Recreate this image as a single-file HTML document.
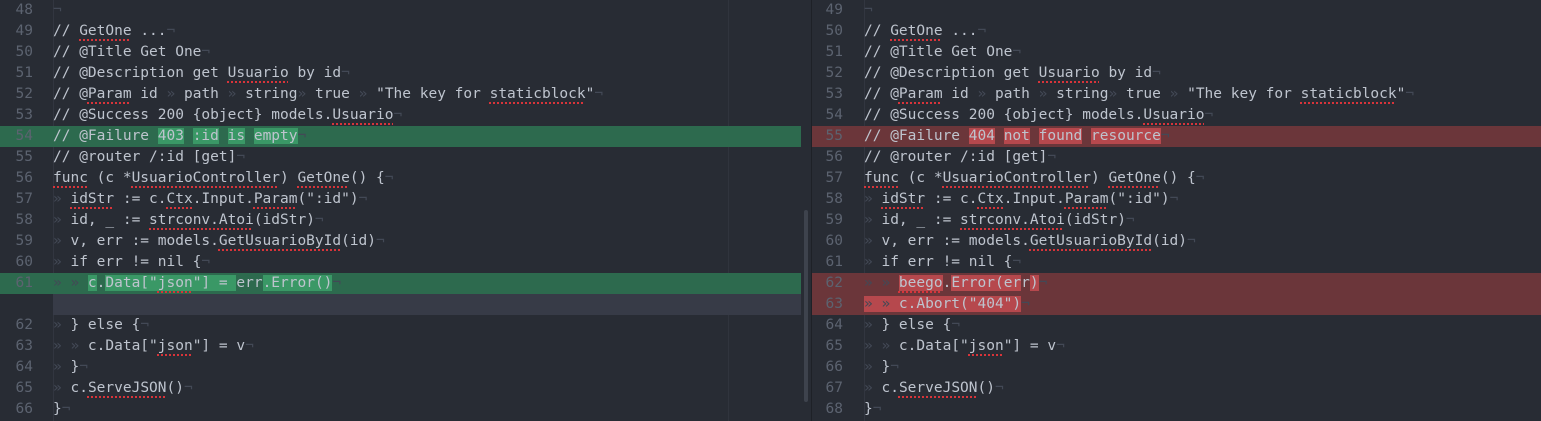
<!DOCTYPE html>
<html><head><meta charset="utf-8">
<style>
*{margin:0;padding:0;box-sizing:border-box}
body{width:1541px;height:421px;background:#282c34;overflow:hidden;position:relative;font-family:"DejaVu Sans Mono","Liberation Mono",monospace;font-size:14.5px;color:#bec4ce}
.pane{position:absolute;top:0;height:421px;overflow:hidden}
.row{position:absolute;left:0;right:0;height:21px;line-height:21px;white-space:pre}
.n{position:absolute;left:0;text-align:right;color:#5c6370}
.c{position:absolute}
.gl{background:#2d6a4e}
.gw{background:#3a9866}
.rl{background:#6b363a}
.rw{background:#b6484d}
.fill{background:#373b47}
.i{color:#434956}
.u{text-decoration:underline dotted #d8343a;text-decoration-thickness:2px;text-underline-offset:4px}
</style></head><body>

<div class="pane" style="left:0;width:801px">
<div style="position:absolute;left:53px;top:0;width:1px;height:421px;background:#323640"></div>
<div style="position:absolute;left:728px;top:0;width:1px;height:421px;background:#30343d"></div>
<div class="row" style="top:0"><span class="n" style="width:33px">48</span><span class="c" style="left:53px"><span class="i">¬</span></span></div>
<div class="row" style="top:21px"><span class="n" style="width:33px">49</span><span class="c" style="left:53px">// <span class="u">GetOne</span> ...<span class="i">¬</span></span></div>
<div class="row" style="top:42px"><span class="n" style="width:33px">50</span><span class="c" style="left:53px">// @Title Get One<span class="i">¬</span></span></div>
<div class="row" style="top:63px"><span class="n" style="width:33px">51</span><span class="c" style="left:53px">// @Description get <span class="u">Usuario</span> by id<span class="i">¬</span></span></div>
<div class="row" style="top:84px"><span class="n" style="width:33px">52</span><span class="c" style="left:53px">// @<span class="u">Param</span> id<span class="i"> » </span>path<span class="i"> » </span>string<span class="i">» </span>true<span class="i"> » </span>"The key for <span class="u">staticblock</span>"<span class="i">¬</span></span></div>
<div class="row" style="top:105px"><span class="n" style="width:33px">53</span><span class="c" style="left:53px">// @Success 200 {object} models.<span class="u">Usuario</span><span class="i">¬</span></span></div>
<div class="row gl" style="top:126px"><span class="n" style="width:33px">54</span><span class="c" style="left:53px">// @Failure <span class="gw">403</span> <span class="gw">:id</span> <span class="gw">is</span> <span class="gw">empty</span><span class="i">¬</span></span></div>
<div class="row" style="top:147px"><span class="n" style="width:33px">55</span><span class="c" style="left:53px">// @router /:id [get]<span class="i">¬</span></span></div>
<div class="row" style="top:168px"><span class="n" style="width:33px">56</span><span class="c" style="left:53px"><span class="u">func</span> (c *<span class="u">UsuarioController</span>) <span class="u">GetOne</span>() {<span class="i">¬</span></span></div>
<div class="row" style="top:189px"><span class="n" style="width:33px">57</span><span class="c" style="left:53px"><span class="i">» </span><span class="u">idStr</span> := c.<span class="u">Ctx</span>.Input.<span class="u">Param</span>(":id")<span class="i">¬</span></span></div>
<div class="row" style="top:210px"><span class="n" style="width:33px">58</span><span class="c" style="left:53px"><span class="i">» </span>id, _ := <span class="u">strconv.Atoi</span>(idStr)<span class="i">¬</span></span></div>
<div class="row" style="top:231px"><span class="n" style="width:33px">59</span><span class="c" style="left:53px"><span class="i">» </span>v, err := models.<span class="u">GetUsuarioById</span>(id)<span class="i">¬</span></span></div>
<div class="row" style="top:252px"><span class="n" style="width:33px">60</span><span class="c" style="left:53px"><span class="i">» </span>if err != nil {<span class="i">¬</span></span></div>
<div class="row gl" style="top:273px"><span class="n" style="width:33px">61</span><span class="c" style="left:53px"><span class="i">» » </span><span class="gw">c</span>.<span class="gw">Data["<span class="u">json</span>"] = </span>err<span class="gw">.Error()</span><span class="i">¬</span></span></div>
<div class="row fill" style="top:294px;left:53px"></div>
<div class="row" style="top:315px"><span class="n" style="width:33px">62</span><span class="c" style="left:53px"><span class="i">» </span>} else {<span class="i">¬</span></span></div>
<div class="row" style="top:336px"><span class="n" style="width:33px">63</span><span class="c" style="left:53px"><span class="i">» » </span>c.Data["<span class="u">json</span>"] = v<span class="i">¬</span></span></div>
<div class="row" style="top:357px"><span class="n" style="width:33px">64</span><span class="c" style="left:53px"><span class="i">» </span>}<span class="i">¬</span></span></div>
<div class="row" style="top:378px"><span class="n" style="width:33px">65</span><span class="c" style="left:53px"><span class="i">» </span>c.<span class="u">ServeJSON</span>()<span class="i">¬</span></span></div>
<div class="row" style="top:399px"><span class="n" style="width:33px">66</span><span class="c" style="left:53px">}<span class="i">¬</span></span></div>
</div>
<div style="position:absolute;left:804px;top:210px;width:4px;height:192px;background:#3e434d;border-radius:2px"></div>
<div style="position:absolute;left:811px;top:0;width:1px;height:421px;background:#1e2127"></div>

<div class="pane" style="left:812px;width:729px">
<div style="position:absolute;left:52px;top:0;width:1px;height:421px;background:#323640"></div>
<div class="row" style="top:0"><span class="n" style="width:31px">49</span><span class="c" style="left:52px"><span class="i">¬</span></span></div>
<div class="row" style="top:21px"><span class="n" style="width:31px">50</span><span class="c" style="left:52px">// <span class="u">GetOne</span> ...<span class="i">¬</span></span></div>
<div class="row" style="top:42px"><span class="n" style="width:31px">51</span><span class="c" style="left:52px">// @Title Get One<span class="i">¬</span></span></div>
<div class="row" style="top:63px"><span class="n" style="width:31px">52</span><span class="c" style="left:52px">// @Description get <span class="u">Usuario</span> by id<span class="i">¬</span></span></div>
<div class="row" style="top:84px"><span class="n" style="width:31px">53</span><span class="c" style="left:52px">// @<span class="u">Param</span> id<span class="i"> » </span>path<span class="i"> » </span>string<span class="i">» </span>true<span class="i"> » </span>"The key for <span class="u">staticblock</span>"<span class="i">¬</span></span></div>
<div class="row" style="top:105px"><span class="n" style="width:31px">54</span><span class="c" style="left:52px">// @Success 200 {object} models.<span class="u">Usuario</span><span class="i">¬</span></span></div>
<div class="row rl" style="top:126px"><span class="n" style="width:31px">55</span><span class="c" style="left:52px">// @Failure <span class="rw">404</span> <span class="rw">not</span> <span class="rw">found</span> <span class="rw">resource</span><span class="i">¬</span></span></div>
<div class="row" style="top:147px"><span class="n" style="width:31px">56</span><span class="c" style="left:52px">// @router /:id [get]<span class="i">¬</span></span></div>
<div class="row" style="top:168px"><span class="n" style="width:31px">57</span><span class="c" style="left:52px"><span class="u">func</span> (c *<span class="u">UsuarioController</span>) <span class="u">GetOne</span>() {<span class="i">¬</span></span></div>
<div class="row" style="top:189px"><span class="n" style="width:31px">58</span><span class="c" style="left:52px"><span class="i">» </span><span class="u">idStr</span> := c.<span class="u">Ctx</span>.Input.<span class="u">Param</span>(":id")<span class="i">¬</span></span></div>
<div class="row" style="top:210px"><span class="n" style="width:31px">59</span><span class="c" style="left:52px"><span class="i">» </span>id, _ := <span class="u">strconv.Atoi</span>(idStr)<span class="i">¬</span></span></div>
<div class="row" style="top:231px"><span class="n" style="width:31px">60</span><span class="c" style="left:52px"><span class="i">» </span>v, err := models.<span class="u">GetUsuarioById</span>(id)<span class="i">¬</span></span></div>
<div class="row" style="top:252px"><span class="n" style="width:31px">61</span><span class="c" style="left:52px"><span class="i">» </span>if err != nil {<span class="i">¬</span></span></div>
<div class="row rl" style="top:273px"><span class="n" style="width:31px">62</span><span class="c" style="left:52px"><span class="i">» » </span><span class="rw"><span class="u">beego</span></span>.<span class="rw">Error(er</span>r<span class="rw">)</span><span class="i">¬</span></span></div>
<div class="row rl" style="top:294px"><span class="n" style="width:31px">63</span><span class="c" style="left:52px"><span class="rw"><span class="i">» » </span>c.Abort("404")</span><span class="i">¬</span></span></div>
<div class="row" style="top:315px"><span class="n" style="width:31px">64</span><span class="c" style="left:52px"><span class="i">» </span>} else {<span class="i">¬</span></span></div>
<div class="row" style="top:336px"><span class="n" style="width:31px">65</span><span class="c" style="left:52px"><span class="i">» » </span>c.Data["<span class="u">json</span>"] = v<span class="i">¬</span></span></div>
<div class="row" style="top:357px"><span class="n" style="width:31px">66</span><span class="c" style="left:52px"><span class="i">» </span>}<span class="i">¬</span></span></div>
<div class="row" style="top:378px"><span class="n" style="width:31px">67</span><span class="c" style="left:52px"><span class="i">» </span>c.<span class="u">ServeJSON</span>()<span class="i">¬</span></span></div>
<div class="row" style="top:399px"><span class="n" style="width:31px">68</span><span class="c" style="left:52px">}<span class="i">¬</span></span></div>
</div>
</body></html>
